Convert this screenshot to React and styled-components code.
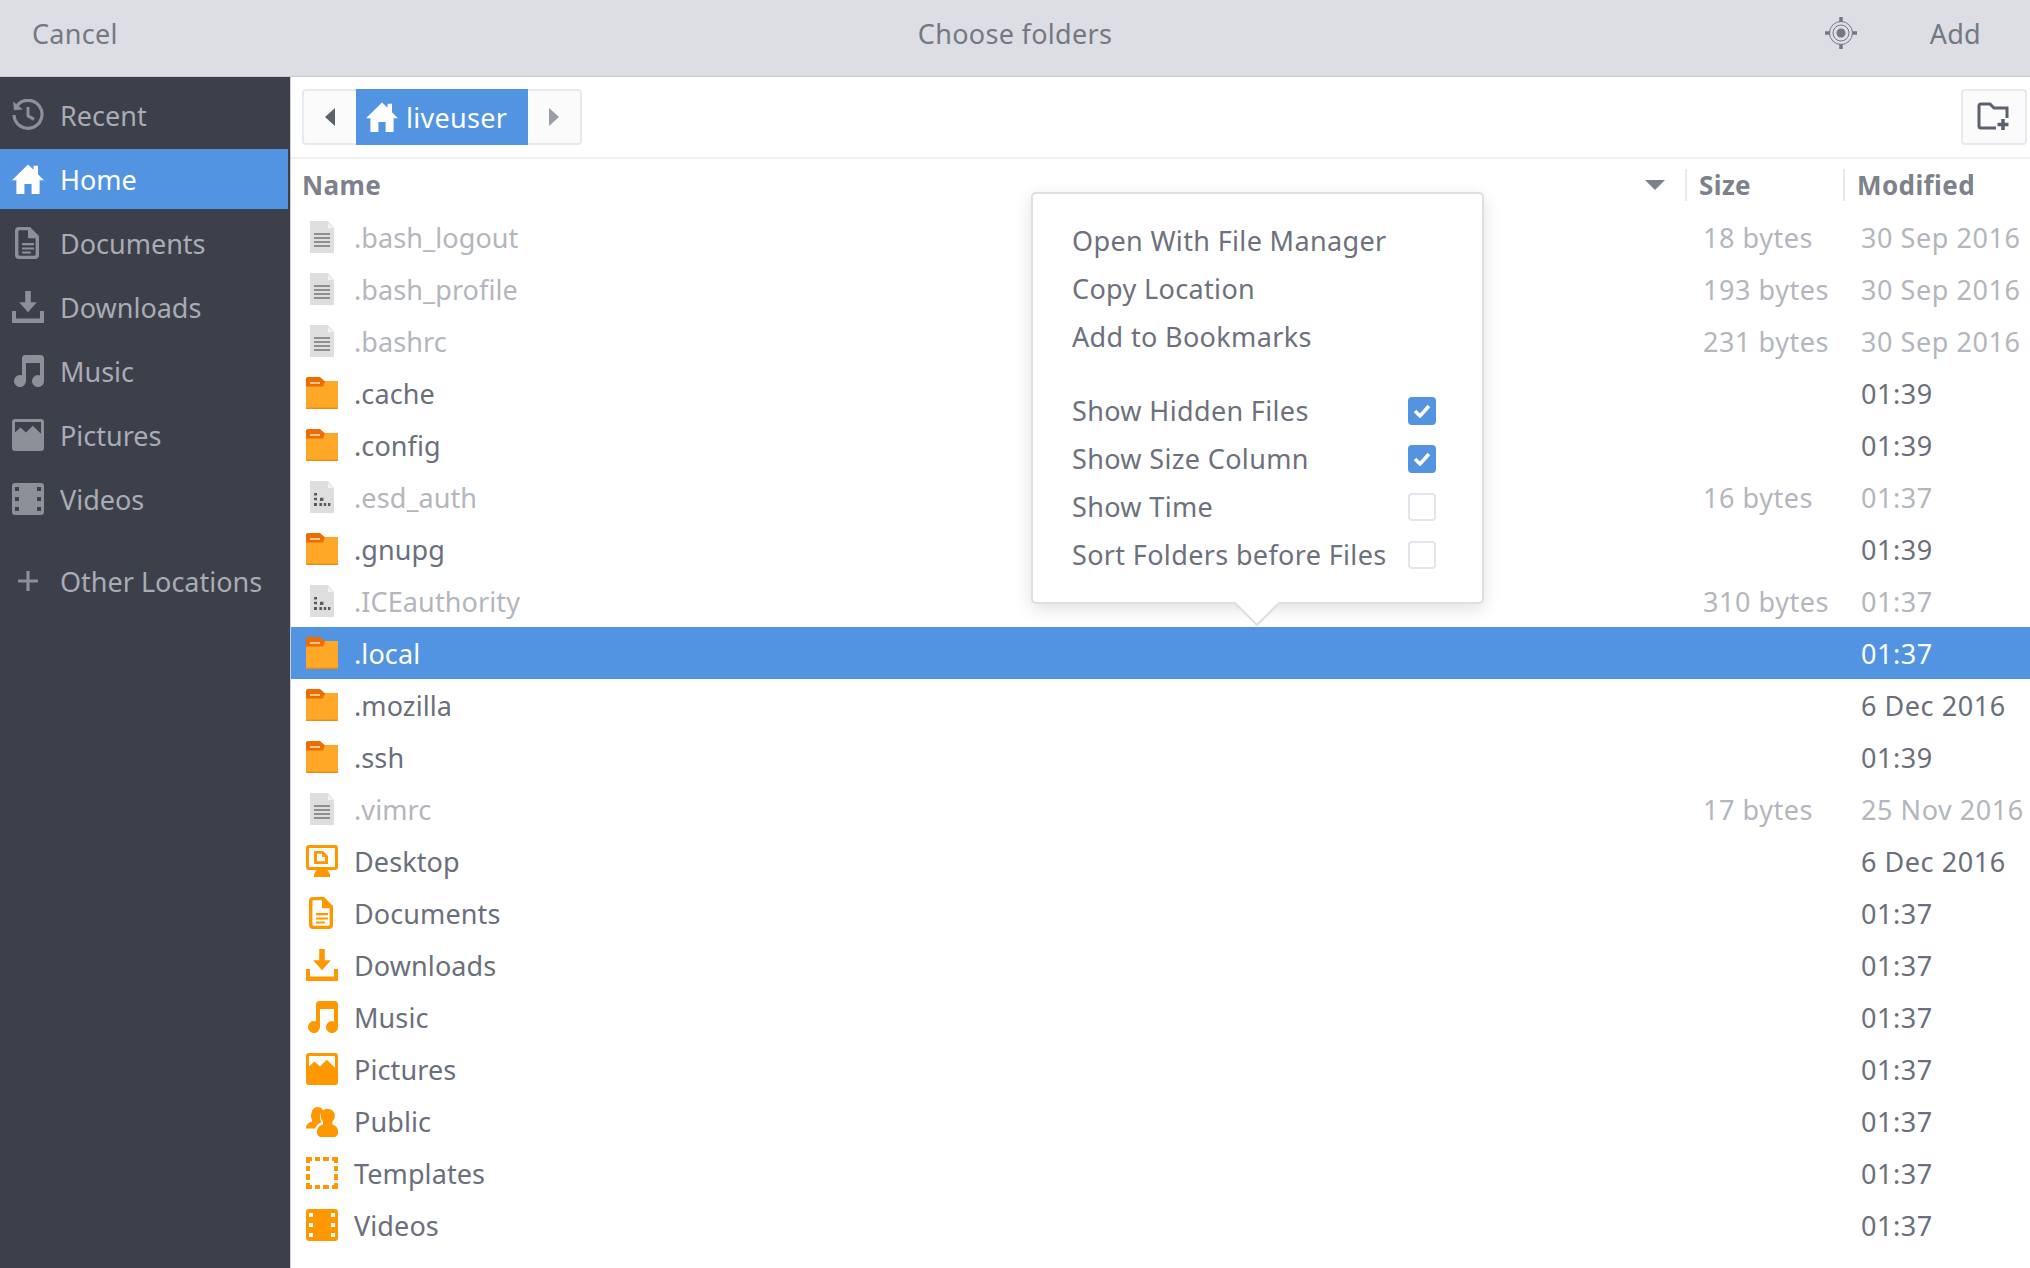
import React from "react";
import styled, { createGlobalStyle } from "styled-components";

const GlobalStyle = createGlobalStyle`
  html, body {
    margin: 0;
    padding: 0;
    height: 100%;
    overflow: hidden;
    background: #fff;
  }
  * {
    box-sizing: border-box;
  }
`;

const Page = styled.div`
  width: 2030px;
  height: 1268px;
  display: flex;
  flex-direction: column;
  font-family: "Noto Sans", "Open Sans", sans-serif;
  font-size: 27px;
  color: #5c616c;
  position: relative;
  overflow: hidden;
`;

const TitleBar = styled.header`
  height: 77px;
  flex: none;
  display: grid;
  grid-template-columns: 1fr auto 1fr;
  align-items: center;
  padding: 0 32px 10px;
  background: #dcdee3;
  border-bottom: 1px solid #c8cad0;
  color: #737882;
  letter-spacing: 0.3px;
`;

const TitleActions = styled.div`
  display: flex;
  justify-content: flex-end;
  align-items: center;
  gap: 72px;
  padding-right: 17px;
`;

const TargetIcon = styled.svg`
  width: 34px;
  height: 34px;
  color: #737882;
`;

const Body = styled.div`
  flex: 1;
  display: flex;
  min-height: 0;
`;

const Sidebar = styled.nav`
  width: 290px;
  flex: none;
  padding-top: 8px;
  background: #3c404b;
  display: flex;
  flex-direction: column;
  gap: 4px;
`;

const Place = styled.div`
  height: 60px;
  display: flex;
  align-items: center;
  gap: 16px;
  padding-left: 12px;
  margin-right: 2px;
  margin-top: ${(props) => (props.$apart ? "18px" : "0")};
  color: ${(props) => (props.$active ? "#fff" : "#a9acb4")};
  background: ${(props) => (props.$active ? "#5294e2" : "transparent")};
`;

const PlaceIcon = styled.span`
  display: flex;
  color: ${(props) => (props.$active ? "#fff" : "#8d9099")};
`;

const Main = styled.main`
  flex: 1;
  min-width: 0;
  display: flex;
  flex-direction: column;
  border-left: 1px solid #c8cad0;
`;

const PathBar = styled.div`
  height: 82px;
  flex: none;
  display: flex;
  justify-content: space-between;
  align-items: flex-start;
  padding: 12px 3px 0 11px;
  border-bottom: 2px solid #eef0f2;
`;

const PathGroup = styled.div`
  display: flex;
  height: 56px;
  border: 2px solid #e6e9f1;
  border-radius: 4px;
  background: #fbfbfc;
`;

const ArrowButton = styled.div`
  width: ${(props) => props.$w}px;
  display: flex;
  justify-content: center;
  align-items: center;
  color: ${(props) => props.$color};
`;

const Crumb = styled.div`
  width: 172px;
  margin: -2px 0;
  display: flex;
  align-items: center;
  gap: 8px;
  padding-left: 10px;
  background: #5294e2;
  color: #fff;
  letter-spacing: 0.3px;
`;

const NewFolderButton = styled.div`
  width: 66px;
  height: 56px;
  display: flex;
  justify-content: center;
  align-items: center;
  border: 2px solid #e6e9f1;
  border-radius: 4px;
  background: #fbfbfc;
  color: #5c616c;
`;

const Columns = styled.div`
  height: 52px;
  flex: none;
  display: grid;
  grid-template-columns: 1fr 158px 187px;
  align-items: center;
  font-weight: 700;
  font-size: 26px;
  letter-spacing: 0.4px;
  color: #7c818b;
`;

const NameHead = styled.div`
  display: flex;
  justify-content: space-between;
  align-items: center;
  padding: 0 20px 0 11px;
`;

const SideHead = styled.div`
  height: 32px;
  display: flex;
  align-items: center;
  padding-left: 12px;
  border-left: 2px solid #eaebee;
`;

const FileList = styled.div`
  flex: 1;
  min-height: 0;
`;

const FileRow = styled.div`
  height: 52px;
  display: grid;
  grid-template-columns: 1fr 158px 169px;
  align-items: center;
  white-space: nowrap;
  color: ${(props) => (props.$selected ? "#fff" : props.$dim ? "#b3b6bc" : "#6a6f7b")};
  background: ${(props) => (props.$selected ? "#5294e2" : "transparent")};
`;

const FileName = styled.div`
  display: flex;
  align-items: center;
  gap: 16px;
  padding-left: 15px;
  letter-spacing: 0.1px;
`;

const FileMeta = styled.span`
  letter-spacing: 0.55px;
`;

const FileIcon = styled.span`
  display: flex;
  color: #ff9800;
`;

const Popover = styled.div`
  position: absolute;
  left: 1031px;
  top: 192px;
  width: 453px;
  height: 412px;
  padding: 22px 46px 24px 39px;
  background: #fff;
  border: 2px solid #dcdfe3;
  border-radius: 5px;
  box-shadow: 0 5px 18px rgba(0, 0, 0, 0.12);
  color: #6c717c;
  letter-spacing: 0.35px;
`;

const PopoverTail = styled.svg`
  position: absolute;
  left: 201px;
  top: 408px;
  width: 46px;
  height: 24px;
`;

const MenuItem = styled.div`
  height: 48px;
  display: flex;
  justify-content: space-between;
  align-items: center;
  margin-top: ${(props) => (props.$apart ? "26px" : "0")};
  white-space: nowrap;
`;

const CheckBox = styled.span`
  width: 28px;
  height: 28px;
  flex: none;
  margin-top: 2px;
  display: flex;
  justify-content: center;
  align-items: center;
  border-radius: 4px;
  background: ${(props) => (props.$on ? "#5294e2" : "#fff")};
  border: 2px solid ${(props) => (props.$on ? "#5294e2" : "#e2e4ee")};
  color: #fff;
`;

const Svg = ({ size = 32, children }) => (
  <svg width={size} height={size} viewBox="0 0 16 16" fill="currentColor">
    {children}
  </svg>
);

const icons = {
  recent: (
    <>
      <path d="M2.600 3.200A7 7 0 1 1 1 8" fill="none" stroke="currentColor" strokeWidth="1.600" />
      <path d="M.6 1.200 1 5.600l4.400-.4z" />
      <path d="M8 4v4.400l3 1.800" fill="none" stroke="currentColor" strokeWidth="1.500" />
    </>
  ),
  home: <path d="M8 .8 0 8.600h2.200V15.500h4V10.500h3.600v5h4V8.600H16l-3-3V1.400h-2.200v2z" />,
  documents: (
    <path
      fillRule="evenodd"
      d="M3.500 0H9l4.500 4.500V14a2 2 0 0 1-2 2h-8a2 2 0 0 1-2-2V2a2 2 0 0 1 2-2zm.3 1.600a.6.6 0 0 0-.6.6v11.600c0 .3.3.6.6.6h7.400c.3 0 .6-.3.6-.6V5.600H8V1.600zM5 8h6v1.100H5zm0 2.200h6v1.100H5zm0 2h4.400v1H5z"
    />
  ),
  downloads: <path d="M6.600 0h2.800v5.600h3L8 10.600 3.600 5.600h3zM0 10h2v3.800h12V10h2v6H0z" />,
  music: (
    <path d="M5 1.600C5 .7 5.700 0 6.600 0h7.800C15.300 0 16 .7 16 1.600V13a3 3 0 1 1-2-2.800V4H7v9a3 3 0 1 1-2-2.800z" />
  ),
  pictures: (
    <path
      fillRule="evenodd"
      d="M1.500 0h13A1.500 1.500 0 0 1 16 1.500v13a1.500 1.500 0 0 1-1.500 1.500h-13A1.500 1.500 0 0 1 0 14.500v-13A1.500 1.500 0 0 1 1.500 0zM1.500 1.500v5.200l2.700-2.500 2.800 2.500 3.400-3.300 4.100 4V1.500z"
    />
  ),
  videos: (
    <path
      fillRule="evenodd"
      d="M1.500 0h13A1.500 1.500 0 0 1 16 1.500v13a1.500 1.500 0 0 1-1.500 1.500h-13A1.500 1.500 0 0 1 0 14.500v-13A1.500 1.500 0 0 1 1.500 0zM1.500 2v2h2V2zm11 0v2h2V2zm-11 5v2h2V7zm11 0v2h2V7zm-11 5v2h2v-2zm11 0v2h2v-2z"
    />
  ),
  desktop: (
    <path
      fillRule="evenodd"
      d="M1.500 0h13A1.500 1.500 0 0 1 16 1.500V11a1.500 1.500 0 0 1-1.500 1.500h-3.800l1.300 2V16H4v-1.500l1.300-2H1.500A1.500 1.500 0 0 1 0 11V1.500A1.500 1.500 0 0 1 1.500 0zm0 1.500V11h13V1.500zM4 3h4.500L11 5.500V9.500H4zm1.500 1.400v3.700h4V6H8V4.400z"
    />
  ),
  public: (
    <path d="M5.800 1A3 3 0 0 1 8.600 3 3.300 3.300 0 0 0 7 6c0 1 .3 1.800.8 2.500a6 6 0 0 0-3.300 3.300H0c-.3-2 1.300-3 3-3.600V7.300A3.500 3.500 0 0 1 2.800 4a3 3 0 0 1 3-3zm5.400 1a3.200 3.200 0 0 1 3.200 3.300c0 1.200-.4 2.300-1.200 3v1.500c2 .6 3 1.800 2.800 4.200 0 1-1 2-2 2H7.500c-1 0-2-1-2-2-.1-2.300 1-3.600 3-4.200V8.300c-.8-.7-1.200-1.800-1.200-3A3.300 3.300 0 0 1 11.200 2z" />
  ),
  templates: (
    <path d="M0 0h3v2H2v1H0zm4.500 0h2.500v2H4.500zm4 0h3v2h-3zM13 0h3v3h-2V2h-1zM0 4.500h2V7H0zM14 4.500h2V7h-2zM0 8.500h2v3H0zM14 8.500h2v3h-2zM0 13h2v1h1v2H0zM14 13h2v3h-3v-2h1zM4.500 14h2.500v2H4.500zm4 0h3v2h-3z" />
  ),
};

const FolderIcon = () => (
  <Svg>
    <path d="M0 2.500H8.500L9.500 2H16V16H0z" fill="#ffa726" />
    <path d="M0 1C0 .4.400 0 1 0h6l2.500 2.200L8.500 4.800H0z" fill="#ef6c00" />
    <rect x="0" y="15.300" width="16" height=".7" fill="#f08c10" />
    <rect x="2" y="2.600" width="5" height=".8" fill="#ffe0b2" />
  </Svg>
);

const TextFileIcon = () => (
  <Svg>
    <path d="M2 0h9l3 3.500V16H2z" fill="#dedede" />
    <path d="M11 1l2.500 2.500H11z" fill="#f4f4f4" />
    <path d="M4 6h8v1H4zm0 2h8v1H4zm0 2h8v1H4zm0 2h8v1H4z" fill="#8f8f8f" />
  </Svg>
);

const BinaryFileIcon = () => (
  <Svg>
    <path d="M2 0h9l3 3.500V16H2z" fill="#dedede" />
    <path d="M11 1l2.500 2.500H11z" fill="#f4f4f4" />
    <path
      d="M4 6h1.500v1.200H4zm0 2.400h1.500v1.200H4zm3 0h1.700v1.600H7zM4 11h1.500v1.500H4zm2.700 0h1.300v1.500H6.700zm2.200 0h1.200v1.500H8.900zm2.100 0h1.200v1.500H11z"
      fill="#5b5b5b"
    />
  </Svg>
);

const places = [
  { name: "Recent", icon: "recent" },
  { name: "Home", icon: "home", active: true },
  { name: "Documents", icon: "documents" },
  { name: "Downloads", icon: "downloads" },
  { name: "Music", icon: "music" },
  { name: "Pictures", icon: "pictures" },
  { name: "Videos", icon: "videos" },
];

const files = [
  { name: ".bash_logout", size: "18 bytes", date: "30 Sep 2016", type: "text" },
  { name: ".bash_profile", size: "193 bytes", date: "30 Sep 2016", type: "text" },
  { name: ".bashrc", size: "231 bytes", date: "30 Sep 2016", type: "text" },
  { name: ".cache", date: "01:39", type: "folder" },
  { name: ".config", date: "01:39", type: "folder" },
  { name: ".esd_auth", size: "16 bytes", date: "01:37", type: "binary" },
  { name: ".gnupg", date: "01:39", type: "folder" },
  { name: ".ICEauthority", size: "310 bytes", date: "01:37", type: "binary" },
  { name: ".local", date: "01:37", type: "folder", selected: true },
  { name: ".mozilla", date: "6 Dec 2016", type: "folder" },
  { name: ".ssh", date: "01:39", type: "folder" },
  { name: ".vimrc", size: "17 bytes", date: "25 Nov 2016", type: "text" },
  { name: "Desktop", date: "6 Dec 2016", type: "desktop" },
  { name: "Documents", date: "01:37", type: "documents" },
  { name: "Downloads", date: "01:37", type: "downloads" },
  { name: "Music", date: "01:37", type: "music" },
  { name: "Pictures", date: "01:37", type: "pictures" },
  { name: "Public", date: "01:37", type: "public" },
  { name: "Templates", date: "01:37", type: "templates" },
  { name: "Videos", date: "01:37", type: "videos" },
];

const iconFor = (type) => {
  if (type === "folder") return <FolderIcon />;
  if (type === "text") return <TextFileIcon />;
  if (type === "binary") return <BinaryFileIcon />;
  return <Svg>{icons[type]}</Svg>;
};

const Check = () => (
  <svg width="18" height="14" viewBox="0 0 18 14">
    <path d="M2 7l5 5 9-10" fill="none" stroke="currentColor" strokeWidth="3.500" />
  </svg>
);

const App = () => {
  return (
    <Page>
      <GlobalStyle />
      <TitleBar>
        <span>Cancel</span>
        <span>Choose folders</span>
        <TitleActions>
          <TargetIcon viewBox="0 0 34 34" fill="none" stroke="currentColor">
            <circle cx="17" cy="17" r="11.500" strokeWidth="1" />
            <circle cx="17" cy="17" r="8" strokeWidth="1" />
            <circle cx="17" cy="17" r="4.500" fill="currentColor" stroke="none" />
            <path d="M17 1v5M17 28v5M1 17h5M28 17h5" strokeWidth="3.500" />
          </TargetIcon>
          <span>Add</span>
        </TitleActions>
      </TitleBar>
      <Body>
        <Sidebar>
          {places.map((place) => (
            <Place key={place.name} $active={place.active}>
              <PlaceIcon $active={place.active}>
                <Svg>{icons[place.icon]}</Svg>
              </PlaceIcon>
              {place.name}
            </Place>
          ))}
          <Place $apart>
            <PlaceIcon>
              <Svg>
                <path d="M7.200 3h1.600v4.200H13v1.600H8.800V13H7.200V8.800H3V7.200h4.200z" />
              </Svg>
            </PlaceIcon>
            Other Locations
          </Place>
        </Sidebar>
        <Main>
          <PathBar>
            <PathGroup>
              <ArrowButton $w={52} $color="#5c616c">
                <svg width="12" height="18" viewBox="0 0 12 18" fill="currentColor">
                  <path d="M11 0v18L1 9z" />
                </svg>
              </ArrowButton>
              <Crumb>
                <Svg>{icons.home}</Svg>
                liveuser
              </Crumb>
              <ArrowButton $w={52} $color="#9a9da5">
                <svg width="12" height="18" viewBox="0 0 12 18" fill="currentColor">
                  <path d="M1 0v18l10-9z" />
                </svg>
              </ArrowButton>
            </PathGroup>
            <NewFolderButton>
              <svg width="34" height="30" viewBox="0 0 34 30" fill="none" stroke="currentColor">
                <path d="M19 26H4a2 2 0 0 1-2-2V4a2 2 0 0 1 2-2h9l4 4h13v10" strokeWidth="3" />
                <path d="M26 17v11M20.500 22.500h11" strokeWidth="3.500" />
              </svg>
            </NewFolderButton>
          </PathBar>
          <Columns>
            <NameHead>
              Name
              <svg width="20" height="12" viewBox="0 0 20 12" fill="currentColor">
                <path d="M0 1h20L10 11z" />
              </svg>
            </NameHead>
            <SideHead>Size</SideHead>
            <SideHead>Modified</SideHead>
          </Columns>
          <FileList>
            {files.map((file) => (
              <FileRow
                key={file.name}
                $selected={file.selected}
                $dim={file.type === "text" || file.type === "binary"}
              >
                <FileName>
                  <FileIcon>{iconFor(file.type)}</FileIcon>
                  {file.name}
                </FileName>
                <FileMeta>{file.size}</FileMeta>
                <FileMeta>{file.date}</FileMeta>
              </FileRow>
            ))}
          </FileList>
        </Main>
      </Body>
      <Popover>
        <MenuItem>Open With File Manager</MenuItem>
        <MenuItem>Copy Location</MenuItem>
        <MenuItem>Add to Bookmarks</MenuItem>
        <MenuItem $apart>
          Show Hidden Files
          <CheckBox $on>
            <Check />
          </CheckBox>
        </MenuItem>
        <MenuItem>
          Show Size Column
          <CheckBox $on>
            <Check />
          </CheckBox>
        </MenuItem>
        <MenuItem>
          Show Time
          <CheckBox />
        </MenuItem>
        <MenuItem>
          Sort Folders before Files
          <CheckBox />
        </MenuItem>
        <PopoverTail viewBox="0 0 46 24">
          <path d="M1 0l22 22L45 0z" fill="#fff" />
          <path d="M1 1l22 22L45 1" fill="none" stroke="#dcdfe3" strokeWidth="2" />
        </PopoverTail>
      </Popover>
    </Page>
  );
};

export default App;
